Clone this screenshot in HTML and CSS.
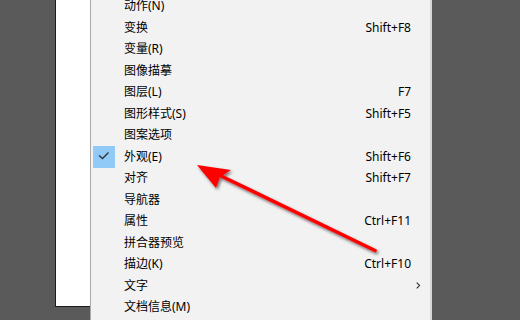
FILE: index.html
```html
<!DOCTYPE html>
<html lang="zh-CN">
<head>
<meta charset="utf-8">
<link rel="stylesheet" href="styles.css">
</head>
<body>
<div class="stage">
  <div class="doc-area">
    <div class="artboard"></div>
  </div>
  <div class="menu">
    <ul class="items">
      <li class="item"><span class="icon"></span><span class="label">动作(N)</span><span class="key"></span><span class="sub"></span></li>
      <li class="item"><span class="icon"></span><span class="label">变换</span><span class="key">Shift+F8</span><span class="sub"></span></li>
      <li class="item"><span class="icon"></span><span class="label">变量(R)</span><span class="key"></span><span class="sub"></span></li>
      <li class="item"><span class="icon"></span><span class="label">图像描摹</span><span class="key"></span><span class="sub"></span></li>
      <li class="item"><span class="icon"></span><span class="label">图层(L)</span><span class="key">F7</span><span class="sub"></span></li>
      <li class="item"><span class="icon"></span><span class="label">图形样式(S)</span><span class="key">Shift+F5</span><span class="sub"></span></li>
      <li class="item"><span class="icon"></span><span class="label">图案选项</span><span class="key"></span><span class="sub"></span></li>
      <li class="item"><span class="icon"><span class="check"><svg width="22" height="22" viewBox="0 0 22 22"><polyline points="6,9.5 9.5,12.5 15.5,6.5" fill="none" stroke="#333" stroke-width="1.4"/></svg></span></span><span class="label">外观(E)</span><span class="key">Shift+F6</span><span class="sub"></span></li>
      <li class="item"><span class="icon"></span><span class="label">对齐</span><span class="key">Shift+F7</span><span class="sub"></span></li>
      <li class="item"><span class="icon"></span><span class="label">导航器</span><span class="key"></span><span class="sub"></span></li>
      <li class="item"><span class="icon"></span><span class="label">属性</span><span class="key">Ctrl+F11</span><span class="sub"></span></li>
      <li class="item"><span class="icon"></span><span class="label">拼合器预览</span><span class="key"></span><span class="sub"></span></li>
      <li class="item"><span class="icon"></span><span class="label">描边(K)</span><span class="key">Ctrl+F10</span><span class="sub"></span></li>
      <li class="item"><span class="icon"></span><span class="label">文字</span><span class="key"></span><span class="sub"><svg width="20" height="21" viewBox="0 0 20 21"><polyline points="6,7.5 9,10.5 6,13.5" fill="none" stroke="#222" stroke-width="1.1"/></svg></span></li>
      <li class="item"><span class="icon"></span><span class="label">文档信息(M)</span><span class="key"></span><span class="sub"></span></li>
    </ul>
  </div>
</div>
<svg class="annotation" width="520" height="320" viewBox="0 0 520 320">
  <defs>
    <filter id="shadow" x="-20%" y="-20%" width="140%" height="140%">
      <feDropShadow dx="1.5" dy="2" stdDeviation="1.6" flood-color="#000" flood-opacity="0.55"/>
    </filter>
  </defs>
  <g filter="url(#shadow)" fill="#ff0000" stroke="none">
    <line x1="375" y1="250.5" x2="218" y2="174.5" stroke="#ff0000" stroke-width="3.6" stroke-linecap="round"/>
    <polygon points="197,165 231,170 220,177 216,188"/>
  </g>
</svg>
</body>
</html>
```
FILE: styles.css
```css
* { box-sizing: border-box; }
html, body {
  margin: 0;
  padding: 0;
}
body {
  width: 520px;
  height: 320px;
  overflow: hidden;
  background: #5a5a5a;
  position: relative;
  font-family: "Noto Sans", "Noto Sans CJK SC", sans-serif;
  font-size: 12px;
  color: #000;
}
.stage {
  display: flex;
  height: 320px;
}
.doc-area {
  width: 90px;
  flex: none;
  padding-left: 55px;
}
.artboard {
  height: 307px;
  background: #fff;
  border-left: 1px solid #1c1c1c;
  border-bottom: 1px solid #1c1c1c;
}
.menu {
  width: 342px;
  flex: none;
  height: 320px;
  background: #f2f2f2;
  border-left: 1px solid #a9a9a9;
  border-right: 2px solid #d6d6d6;
  overflow: hidden;
}
.items {
  list-style: none;
  margin: -4.75px 0 0 0;
  padding: 0;
}
.item {
  height: 21.5px;
  display: grid;
  grid-template-columns: 33px 1fr auto 19px;
  align-items: center;
  white-space: nowrap;
}
.icon {
  display: flex;
  align-items: center;
  padding-left: 2px;
}
.check {
  display: block;
  width: 22px;
  height: 22px;
  background: #91c9f7;
}
.check svg, .sub svg { display: block; }
.label { line-height: 21.5px; }
.key {
  text-align: right;
  line-height: 21.5px;
}
.sub {
  display: flex;
  align-items: center;
}
.annotation {
  position: absolute;
  left: 0;
  top: 0;
  pointer-events: none;
}
```
